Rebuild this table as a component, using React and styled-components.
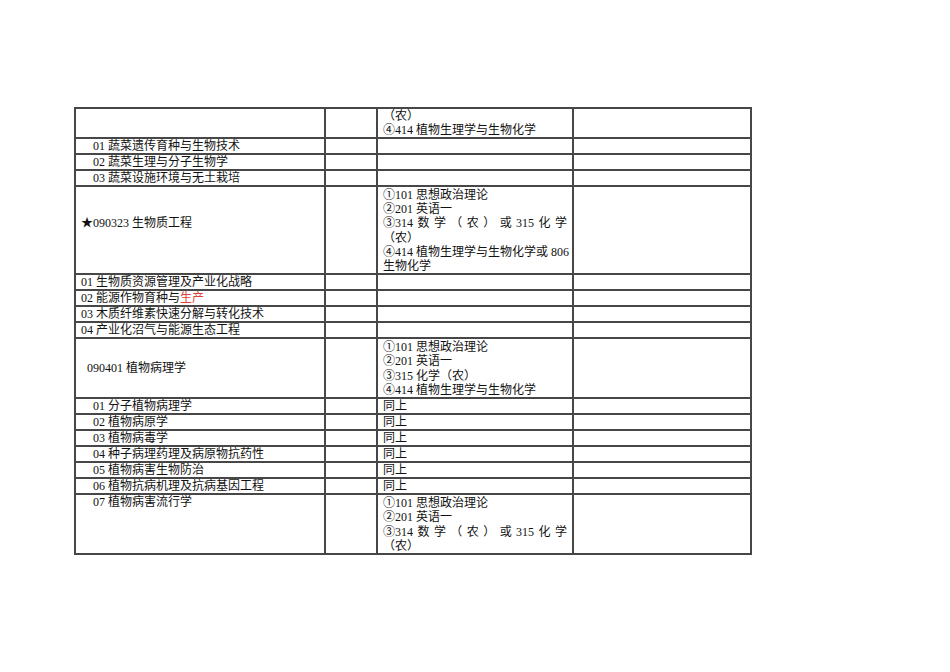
import React from 'react';
import styled, { createGlobalStyle } from 'styled-components';

const GlobalStyle = createGlobalStyle`
  html, body {
    margin: 0;
    padding: 0;
    background: #fff;
  }
  body {
    font-family: "Liberation Serif", "Noto Sans CJK SC", serif;
    color: #111;
  }
`;

const Page = styled.div`
  width: 950px;
  height: 672px;
  padding: 107px 0 0 74px;
  box-sizing: border-box;
`;

const Table = styled.table`
  border-collapse: collapse;
  table-layout: fixed;
  width: 676px;
  font-size: 12px;
`;

const Cell = styled.td`
  border: 2px solid #474747;
  padding: 1px 5px 0;
  line-height: 13px;
  white-space: nowrap;
  overflow: hidden;
  vertical-align: ${p => p.$top ? 'top' : 'middle'};
  padding-left: ${p => 5 + (p.$indent || 0)}px;
  padding-bottom: ${p => p.$padBottom || 0}px;
`;

const Lines = styled.div`
  line-height: ${p => p.$lh || 14.25}px;
`;

const Line = styled.div`
  white-space: nowrap;
`;

const Spread = styled.div`
  display: flex;
  justify-content: space-between;
  white-space: nowrap;
`;

const Red = styled.span`
  color: #e0413a;
`;

const Spaced = () => (
  <Spread>
    {['③314', '数', '学', '（', '农', '）', '或', '315', '化', '学'].map((t, i) => (
      <span key={i}>{t}</span>
    ))}
  </Spread>
);

const rows = [
  { c1: '', exam: <Lines $lh={13.5}><Line>（农）</Line><Line>④414 植物生理学与生物化学</Line></Lines> },
  { c1: '01 蔬菜遗传育种与生物技术', indent: 12 },
  { c1: '02 蔬菜生理与分子生物学', indent: 12 },
  { c1: '03 蔬菜设施环境与无土栽培', indent: 12 },
  {
    c1: '★090323 生物质工程', padBottom: 14,
    exam: (
      <Lines $lh={14.17}>
        <Line>①101 思想政治理论</Line>
        <Line>②201 英语一</Line>
        <Spaced />
        <Line>（农）</Line>
        <Line>④414 植物生理学与生物化学或 806</Line>
        <Line>生物化学</Line>
      </Lines>
    ),
  },
  { c1: '01 生物质资源管理及产业化战略' },
  { c1: <>02 能源作物育种与<Red>生产</Red></> },
  { c1: '03 木质纤维素快速分解与转化技术' },
  { c1: '04 产业化沼气与能源生态工程' },
  {
    c1: '090401 植物病理学', indent: 6,
    exam: (
      <Lines>
        <Line>①101 思想政治理论</Line>
        <Line>②201 英语一</Line>
        <Line>③315 化学（农）</Line>
        <Line>④414 植物生理学与生物化学</Line>
      </Lines>
    ),
  },
  { c1: '01 分子植物病理学', indent: 12, exam: '同上' },
  { c1: '02 植物病原学', indent: 12, exam: '同上' },
  { c1: '03 植物病毒学', indent: 12, exam: '同上' },
  { c1: '04 种子病理药理及病原物抗药性', indent: 12, exam: '同上' },
  { c1: '05 植物病害生物防治', indent: 12, exam: '同上' },
  { c1: '06 植物抗病机理及抗病基因工程', indent: 12, exam: '同上' },
  {
    c1: '07 植物病害流行学', indent: 12, top: true,
    exam: (
      <Lines>
        <Line>①101 思想政治理论</Line>
        <Line>②201 英语一</Line>
        <Spaced />
        <Line>（农）</Line>
      </Lines>
    ),
  },
];

const App = () => (
  <>
    <GlobalStyle />
    <Page>
      <Table>
        <colgroup>
          <col style={{ width: 250 }} />
          <col style={{ width: 52 }} />
          <col style={{ width: 196 }} />
          <col style={{ width: 178 }} />
        </colgroup>
        <tbody>
          {rows.map((r, i) => (
            <tr key={i}>
              <Cell $indent={r.indent} $top={r.top} $padBottom={r.padBottom}>{r.c1}</Cell>
              <Cell />
              <Cell>{r.exam || ''}</Cell>
              <Cell />
            </tr>
          ))}
        </tbody>
      </Table>
    </Page>
  </>
);

export default App;
